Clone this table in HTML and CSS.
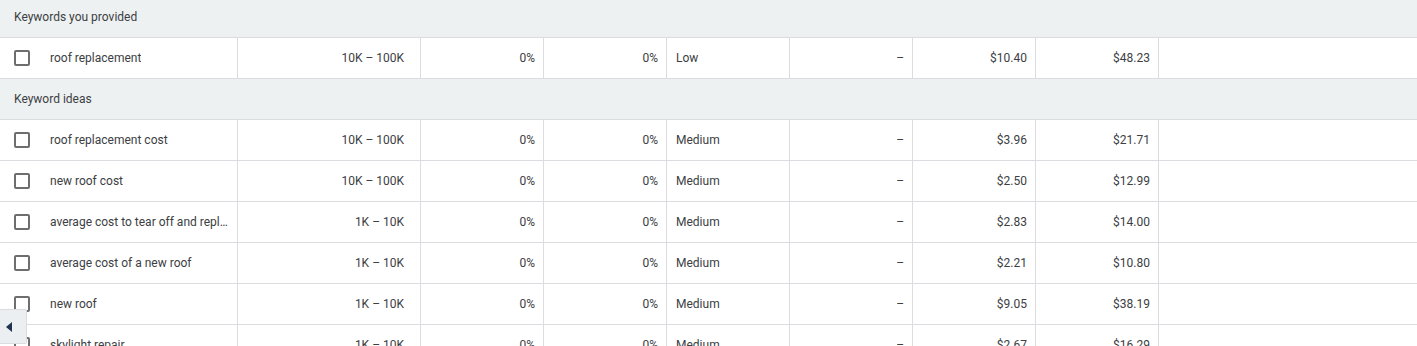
FILE: index.html
```html
<!DOCTYPE html>
<html>
<head>
<meta charset="utf-8">
<link rel="stylesheet" href="styles.css">
</head>
<body>
<div class="table">
  <div class="group first">Keywords you provided</div>
  <div class="row">
    <div class="c kw"><span class="cb"></span><span class="kwt">roof replacement</span></div>
    <div class="c num wide">10K – 100K</div>
    <div class="c num">0%</div>
    <div class="c num">0%</div>
    <div class="c txt">Low</div>
    <div class="c num">–</div>
    <div class="c num">$10.40</div>
    <div class="c num">$48.23</div>
    <div class="c rest"></div>
  </div>
  <div class="group">Keyword ideas</div>
  <div class="row">
    <div class="c kw"><span class="cb"></span><span class="kwt">roof replacement cost</span></div>
    <div class="c num wide">10K – 100K</div>
    <div class="c num">0%</div>
    <div class="c num">0%</div>
    <div class="c txt">Medium</div>
    <div class="c num">–</div>
    <div class="c num">$3.96</div>
    <div class="c num">$21.71</div>
    <div class="c rest"></div>
  </div>
  <div class="row">
    <div class="c kw"><span class="cb"></span><span class="kwt">new roof cost</span></div>
    <div class="c num wide">10K – 100K</div>
    <div class="c num">0%</div>
    <div class="c num">0%</div>
    <div class="c txt">Medium</div>
    <div class="c num">–</div>
    <div class="c num">$2.50</div>
    <div class="c num">$12.99</div>
    <div class="c rest"></div>
  </div>
  <div class="row">
    <div class="c kw"><span class="cb"></span><span class="kwt">average cost to tear off and replace a roof</span></div>
    <div class="c num wide">1K – 10K</div>
    <div class="c num">0%</div>
    <div class="c num">0%</div>
    <div class="c txt">Medium</div>
    <div class="c num">–</div>
    <div class="c num">$2.83</div>
    <div class="c num">$14.00</div>
    <div class="c rest"></div>
  </div>
  <div class="row">
    <div class="c kw"><span class="cb"></span><span class="kwt">average cost of a new roof</span></div>
    <div class="c num wide">1K – 10K</div>
    <div class="c num">0%</div>
    <div class="c num">0%</div>
    <div class="c txt">Medium</div>
    <div class="c num">–</div>
    <div class="c num">$2.21</div>
    <div class="c num">$10.80</div>
    <div class="c rest"></div>
  </div>
  <div class="row">
    <div class="c kw"><span class="cb"></span><span class="kwt">new roof</span></div>
    <div class="c num wide">1K – 10K</div>
    <div class="c num">0%</div>
    <div class="c num">0%</div>
    <div class="c txt">Medium</div>
    <div class="c num">–</div>
    <div class="c num">$9.05</div>
    <div class="c num">$38.19</div>
    <div class="c rest"></div>
  </div>
  <div class="row">
    <div class="c kw"><span class="cb"></span><span class="kwt">skylight repair</span></div>
    <div class="c num wide">1K – 10K</div>
    <div class="c num">0%</div>
    <div class="c num">0%</div>
    <div class="c txt">Medium</div>
    <div class="c num">–</div>
    <div class="c num">$2.67</div>
    <div class="c num">$16.29</div>
    <div class="c rest"></div>
  </div>
</div>
<button class="navbtn" aria-label="scroll left"><svg width="6" height="10" viewBox="0 0 6 10"><path d="M6 0 L0 5 L6 10 Z" fill="#1f3250"/></svg></button>
</body>
</html>
```
FILE: styles.css
```css
html, body {
  margin: 0;
  padding: 0;
  background: #fff;
  overflow: hidden;
}
body {
  font-family: Roboto, "Liberation Sans", Arial, sans-serif;
  font-size: 12px;
  color: #3c4043;
}
.table {
  display: flex;
  flex-direction: column;
}
.group {
  height: 41px;
  box-sizing: border-box;
  background: #eef1f2;
  border-bottom: 1px solid #dadce0;
  display: flex;
  align-items: center;
  padding-left: 14px;
}
.group.first {
  height: 38px;
  padding-bottom: 3px;
}
.row {
  display: flex;
  height: 41px;
  box-sizing: border-box;
  border-bottom: 1px solid #dadce0;
  background: #fff;
}
.c {
  box-sizing: border-box;
  width: 123px;
  flex: none;
  border-right: 1px solid #dadce0;
  display: flex;
  align-items: center;
  white-space: nowrap;
  overflow: hidden;
}
.c.kw {
  width: 238px;
  padding-left: 14px;
  padding-right: 8px;
}
.cb {
  flex: none;
  width: 16px;
  height: 16px;
  box-sizing: border-box;
  border: 2px solid #6e6e6e;
  border-radius: 2px;
  margin-right: 20px;
}
.kwt {
  overflow: hidden;
  text-overflow: ellipsis;
  white-space: nowrap;
}
.c.num {
  justify-content: flex-end;
  padding-right: 8px;
}
.c.num.wide {
  width: 183px;
  padding-right: 16px;
}
.c.txt {
  padding-left: 9px;
}
.c.rest {
  flex: 1;
  border-right: none;
}
.navbtn {
  position: fixed;
  left: 0;
  top: 309px;
  width: 27px;
  height: 35px;
  margin: 0;
  padding: 0 0 0 6px;
  background: #eceff1;
  border: 1px solid #dadce0;
  border-left: none;
  border-radius: 0 2px 2px 0;
  display: flex;
  align-items: center;
  justify-content: flex-start;
}
```
